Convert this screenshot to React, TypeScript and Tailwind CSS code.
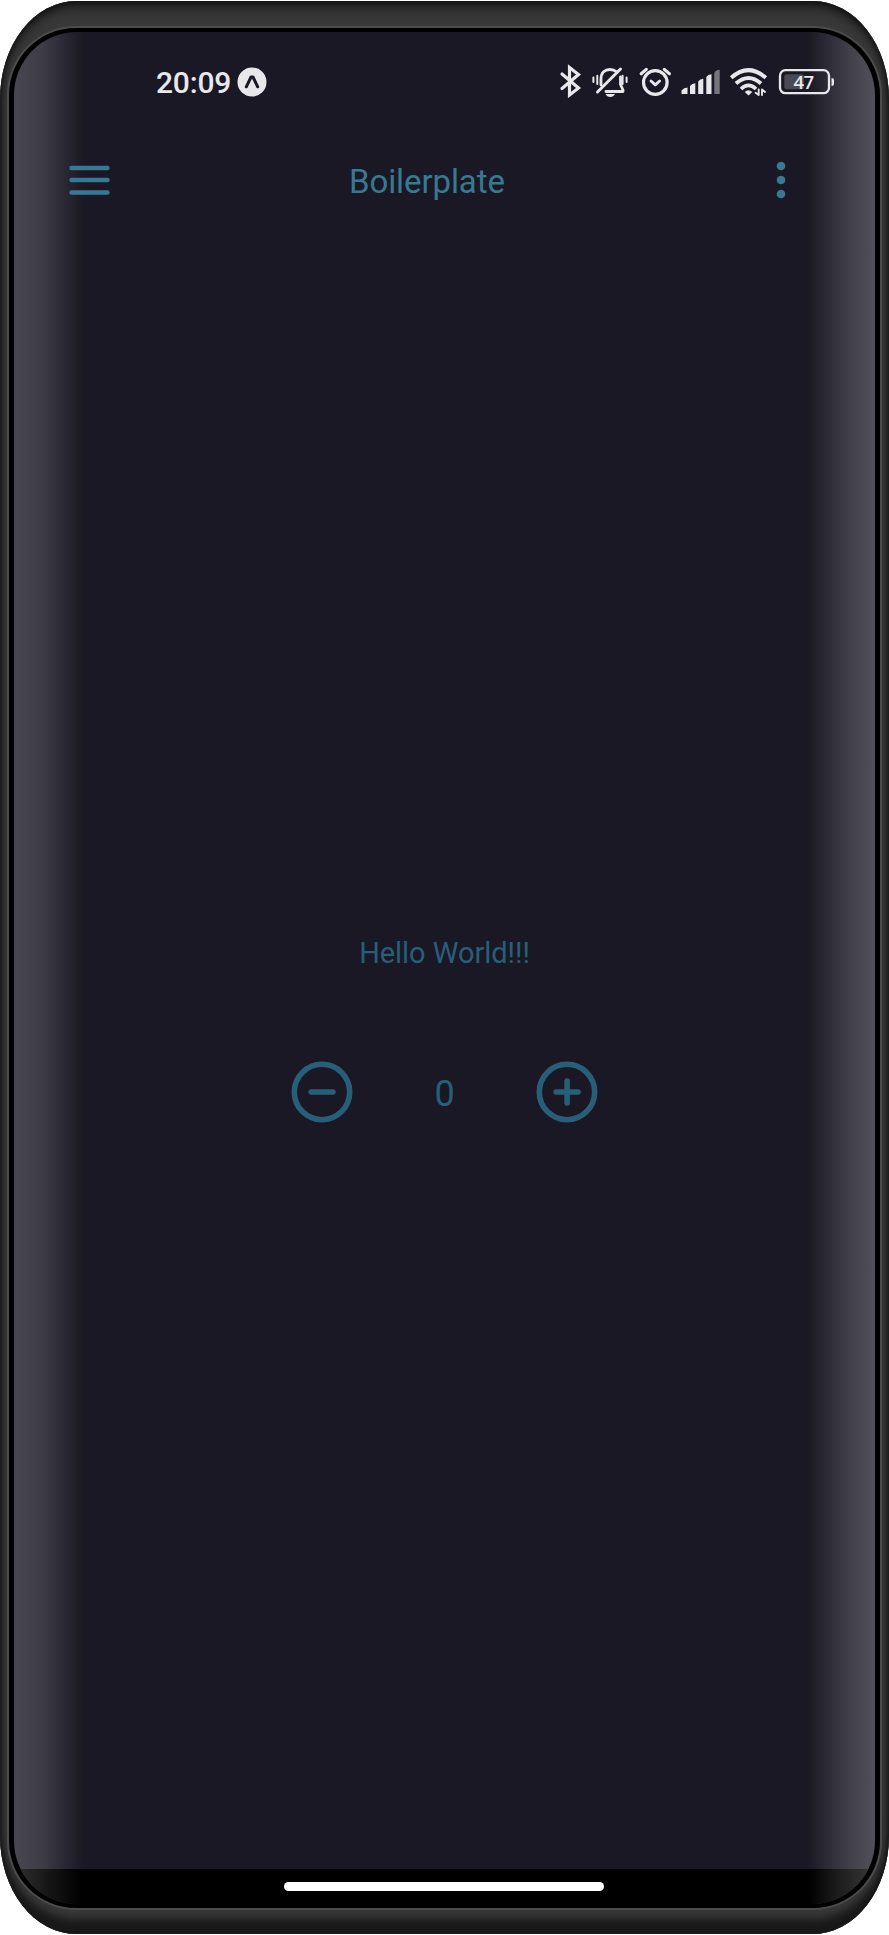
import React from "react";

function ExpoMark() {
  return (
    <svg viewBox="0 0 30 30" className="h-[30px] w-[30px]">
      <circle cx="15" cy="15" r="14.5" fill="#e8e8ea" />
      <path d="M9.3 19.8 L14 10 H16 L20.7 19.8" fill="none" stroke="#1a1824" strokeWidth="3" strokeLinecap="round" strokeLinejoin="round" />
    </svg>
  );
}

function StatusIcons() {
  return (
    <svg viewBox="545 50 300 60" className="h-[60px] w-[300px]" fill="none" stroke="#e8e8ea" strokeLinecap="round" strokeLinejoin="round">
      <path d="M562 74 L578.5 88 L569.5 95 V67.5 L578.5 74.5 L562 88.5" strokeWidth="3.2" strokeLinejoin="miter" />
      <path d="M601 85 V79 C601 72.500 605 69.500 610 69.500 C613 69.500 615 70.500 617 72 M620.500 77 V84.500 L623 90 V91.500 H606" strokeWidth="2.8" />
      <path d="M597.500 92 L620.500 69" strokeWidth="3" />
      <path d="M605.500 94 H615 Q613.500 97 610.300 97 Q607 97 605.500 94Z" fill="#e8e8ea" stroke="none" />
      <path d="M593.400 77.500 V82 M597.300 75.800 V84 M622.600 75.800 V84 M626.600 77.500 V82" strokeWidth="2" />
      <circle cx="655.300" cy="82.500" r="11.800" strokeWidth="3.200" />
      <path d="M651 81 L655.300 84.800 L659.600 81" strokeWidth="2.900" />
      <path d="M641.200 73.700 L646.300 69.400 M664.300 69.400 L669.400 73.700" strokeWidth="3.200" />
      <g fill="#e8e8ea" stroke="none">
        <path d="M681.500 94 V90.500 Q684 87.500 687.500 87.500 V94 Z" />
        <path d="M690 94 V86 Q692 83.300 695.300 83.300 V94 Z" />
        <path d="M698.200 94 V81.500 Q700 78.800 703.300 78.800 V94 Z" />
        <path d="M706.300 94 V77 Q708 74.300 711.500 74.300 V94 Z" />
        <path d="M714.300 94 V73 Q716 69.800 719.700 69.800 V94 Z" fill="#77757c" />
      </g>
      <path d="M731.200 77.800 Q748.500 62.500 765.800 77.800" strokeWidth="4" strokeLinecap="butt" />
      <path d="M736 83.600 Q748.500 72.400 761 83.600" strokeWidth="4" strokeLinecap="butt" />
      <path d="M741 89 Q748.500 81.800 756 89" strokeWidth="3.700" strokeLinecap="butt" />
      <path d="M744.700 92 Q748.500 88.700 752.300 92 L748.500 95.400Z" fill="#e8e8ea" stroke="none" />
      <path d="M755.600 92.800 L758.700 95 V89.500 M762 95 V89.500 L765 92" strokeWidth="1.900" />
      <rect x="780" y="70.200" width="49" height="23" rx="5.500" strokeWidth="2.300" />
      <rect x="784.300" y="74.300" width="19.500" height="15" rx="2" fill="#4b4953" stroke="none" />
      <path d="M831.500 78 Q834 78 834 80 V84 Q834 86 831.500 86Z" fill="#e8e8ea" stroke="none" />
      <text x="803.500" y="88.500" textAnchor="middle" fontFamily="Open Sans" fontSize="18.500" fontWeight="600" fill="#e8e8ea" stroke="none" letterSpacing="-0.700">47</text>
    </svg>
  );
}

function RoundButton({ label, plus }: { label: string; plus?: boolean }) {
  return (
    <button aria-label={label} className="h-[62px] w-[62px]">
      <svg viewBox="0 0 62 62" className="h-full w-full" fill="none" stroke="#285f78" strokeLinecap="round">
        <circle cx="31" cy="31" r="27.700" strokeWidth="5.600" />
        <path d={plus ? "M20.200 31 H42 M31.100 20.100 V42" : "M20.200 31 H42"} strokeWidth="5.500" />
      </svg>
    </button>
  );
}

export default function App() {
  return (
    <div className="h-[1935px] w-[889px] bg-white py-px font-[Roboto,sans-serif]">
      <div className="h-[1933px] w-full rounded-[76px/98px] bg-[#383838] px-[9px] pt-[27px] pb-[26px] shadow-[inset_0_8px_12px_-3px_#111,inset_0_-18px_9px_-3px_#191919,inset_2px_0_4px_#222,inset_-2px_0_4px_#222]">
        <div className="h-full w-full rounded-[67px] bg-black pt-[4px] shadow-[0_0_0_2px_#4c4c4c]">
          <main className="mx-[5px] flex h-[1872px] flex-col overflow-hidden rounded-[63px] bg-[linear-gradient(90deg,#48464f_0px,#3e3c45_28px,#2b2935_49px,#1b1924_68px,#1a1824_75px,#1a1824_792px,#1b1924_795px,#2f2d38_816px,#45434c_840px,#514f59_861px)]">
            <div className="flex h-[98px] justify-between pr-[30px] pl-[142px]">
              <div className="flex h-[60px] items-center pt-[40px]">
                <span className="w-[81px] text-[30px] font-medium tracking-[-0.2px] text-[#e8e8ea]">20:09</span>
                <ExpoMark />
              </div>
              <div className="pt-[18px]"><StatusIcons /></div>
            </div>
            <header className="flex h-[100px] items-center pr-[89px] pl-[55px]">
              <svg viewBox="0 0 42 30" className="h-[30px] w-[42px]" stroke="#377992" strokeWidth="4.400" strokeLinecap="round">
                <path d="M2.500 3 H38.500 M2.500 15 H38.500 M2.500 27.500 H38.500" />
              </svg>
              <h1 className="ml-[238px] pt-[3px] text-[33px] tracking-[-0.1px] text-[#377992]">Boilerplate</h1>
              <svg viewBox="0 0 10 38" className="ml-auto h-[38px] w-[10px]" fill="#377992">
                <circle cx="5" cy="5" r="4.300" />
                <circle cx="5" cy="19" r="4.300" />
                <circle cx="5" cy="33" r="4.300" />
              </svg>
            </header>
            <section className="flex flex-1 flex-col items-center pt-[702px] text-[#285f78]">
              <p className="h-[42px] text-[29px] leading-[42px] tracking-[-0.05px]">Hello World!!!</p>
              <div className="mt-[87px] flex h-[62px] w-[307px] items-center justify-between">
                <RoundButton label="Decrease" />
                <span className="pt-[4px] text-[36px]">0</span>
                <RoundButton label="Increase" plus />
              </div>
            </section>
            <footer className="flex h-[35px] justify-center bg-[linear-gradient(90deg,#303030_0px,#1b1b1b_28px,#000_67px,#000_795px,#191919_820px,#393939_861px)] pt-[13px]">
              <div className="mr-px h-[9px] w-[320px] rounded-full bg-white" />
            </footer>
          </main>
        </div>
      </div>
    </div>
  );
}
